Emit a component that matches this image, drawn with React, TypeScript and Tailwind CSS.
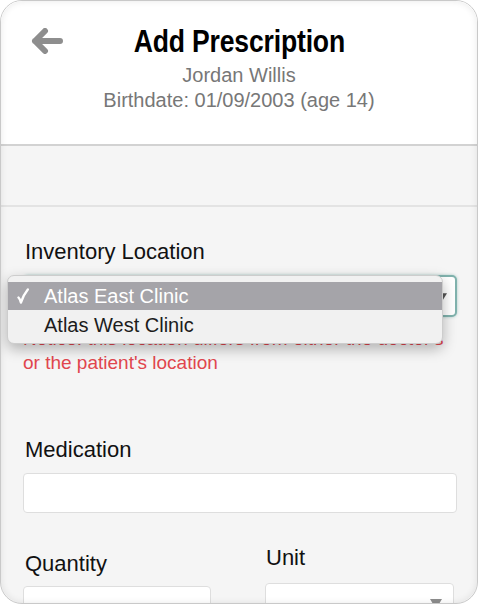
const BackArrow = () => (
  <svg width="32" height="26" viewBox="0 0 32 26" fill="none">
    <path
      d="M4 13H29M4 13L14 3M4 13L14 23"
      stroke="#8e8e8e"
      strokeWidth="6"
      strokeLinecap="round"
      strokeLinejoin="round"
    />
  </svg>
);

const Check = () => (
  <svg width="12" height="16" viewBox="0 0 12 16" fill="none">
    <path
      d="M1.5 9.5C2.6 10.6 3.3 12.2 3.9 14.5C5.6 9.5 7.8 5.2 10.8 1.5"
      stroke="white"
      strokeWidth="2.4"
      strokeLinecap="round"
      strokeLinejoin="round"
    />
  </svg>
);

const Triangle = ({ className }: { className: string }) => (
  <svg className={className} viewBox="0 0 12 10">
    <path d="M0 0H12L6 10Z" fill="currentColor" />
  </svg>
);

const locations = ["Atlas East Clinic", "Atlas West Clinic"];

export default function App() {
  return (
    <div className="min-h-screen bg-white font-['Liberation_Sans',Arial,Helvetica,sans-serif]">
      <div className="relative h-[604px] w-[478px] overflow-hidden rounded-[22px] border border-[#c9c9c9] bg-[#f5f5f5]">
        <header className="h-[145px] border-b-2 border-[#d2d2d2] bg-white">
          <div className="flex pt-[22px]">
            <div className="w-[72px] pl-[30px] pt-[5px]">
              <BackArrow />
            </div>
            <div className="flex flex-1 justify-center">
              <h1 className="scale-x-[0.83] whitespace-nowrap text-[32px] leading-[36px] font-bold tracking-[-0.2px] text-black">
                Add Prescription
              </h1>
            </div>
            <div className="w-[72px]" />
          </div>
          <div className="mt-[4px] text-center text-[20px] leading-[25px] text-[#777]">
            <p>Jordan Willis</p>
            <p>Birthdate: 01/09/2003 (age 14)</p>
          </div>
        </header>

        <div className="h-[59px]" />
        <div className="h-[2px] bg-[#e3e3e3]" />

        <div className="pl-[22px] pr-[20px] pt-[32px]">
          <label className="block pl-[2px] text-[22px] leading-[26px] text-[#111]">Inventory Location</label>
          <div className="relative mt-[10px]">
            <div className="flex h-[42px] items-center justify-end rounded-[5px] border-2 border-[#80b2ad] bg-white pr-[8px] shadow-[0_0_3px_rgba(90,160,150,0.5)]">
              <Triangle className="h-[7px] w-[8px] text-[#555]" />
            </div>
            <div className="absolute -left-[16px] top-0 w-[436px] rounded-[7px] border border-[#cdcdcd] bg-[#f1f1f1] pb-[4px] pt-[6px] shadow-[0_5px_14px_rgba(0,0,0,0.28)]">
              {locations.map((loc, i) => (
                <div
                  key={loc}
                  className={
                    i === 0
                      ? "flex h-[28px] items-center bg-[#a5a4a9] text-[20px] text-white"
                      : "flex h-[29px] items-center text-[20px] text-[#1c1c1c]"
                  }
                >
                  <span className="flex w-[36px] pl-[9px]">{i === 0 ? <Check /> : null}</span>
                  <span>{loc}</span>
                </div>
              ))}
            </div>
          </div>
          <p className="mt-[10px] text-[19px] leading-[24px] text-[#e1464e]">
            Notice: this location differs from either the doctor's or the patient's location
          </p>

          <label className="mt-[62px] block pl-[2px] text-[22px] leading-[26px] text-[#111]">Medication</label>
          <div className="mt-[10px] h-[40px] rounded-[4px] border border-[#dedede] bg-white" />

          <div className="mt-[32px] flex items-start">
            <div className="w-[188px] pt-[6px]">
              <label className="block pl-[2px] text-[22px] leading-[26px] text-[#111]">Quantity</label>
              <div className="mt-[9px] h-[40px] rounded-[4px] border border-[#dedede] bg-white" />
            </div>
            <div className="ml-[54px] w-[189px]">
              <label className="block pl-[1px] text-[22px] leading-[26px] text-[#111]">Unit</label>
              <div className="mt-[12px] flex h-[40px] items-start justify-end rounded-[4px] border border-[#dedede] bg-white pr-[11px] pt-[15px]">
                <Triangle className="h-[10px] w-[12px] text-[#8c8c8c]" />
              </div>
            </div>
          </div>
        </div>

        <div className="pointer-events-none absolute inset-0 rounded-[22px] shadow-[inset_0_0_7px_rgba(0,0,0,0.09)]" />
      </div>
    </div>
  );
}
